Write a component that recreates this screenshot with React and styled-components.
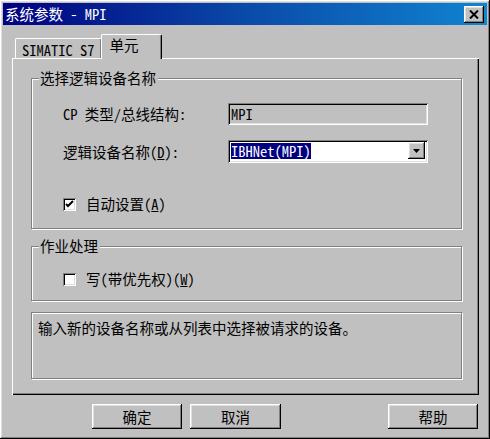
import { createGlobalStyle, styled } from 'styled-components';

const GlobalStyle = createGlobalStyle`
  html, body {
    margin: 0;
    padding: 0;
    background: #c0c0c0;
  }
  body {
    font-family: "Noto Sans Mono CJK SC", "Noto Sans CJK SC", "Liberation Mono", monospace;
    font-size: 14.5px;
    color: #000;
  }
`;

const raised = `
  box-shadow: inset -1px -1px #000, inset 1px 1px #fff,
    inset -2px -2px #808080, inset 2px 2px #dfdfdf;
`;

const sunken = `
  box-shadow: inset 1px 1px #808080, inset -1px -1px #fff,
    inset 2px 2px #000, inset -2px -2px #dfdfdf;
`;

const Window = styled.div`
  box-sizing: border-box;
  width: 490px;
  height: 439px;
  padding: 3px;
  background: #c0c0c0;
  display: flex;
  flex-direction: column;
  ${raised}
`;

const TitleBar = styled.div`
  height: 22px;
  display: flex;
  align-items: center;
  justify-content: space-between;
  padding: 0 3px 0 2px;
  background: linear-gradient(90deg, #000080 0%, #0a4aa8 50%, #1084d0 100%);
  color: #fff;
  line-height: 16px;
`;

const CloseButton = styled.button`
  width: 20px;
  height: 17px;
  padding: 0;
  border: none;
  background: #c0c0c0;
  display: flex;
  align-items: center;
  justify-content: center;
  ${raised}
`;

const Body = styled.div`
  display: flex;
  flex-direction: column;
  padding: 9px 9px 0 9px;
`;

const TabStrip = styled.div`
  display: flex;
  align-items: flex-end;
  height: 24px;
  padding-left: 3px;
  position: relative;
  z-index: 1;
`;

const Tab = styled.div`
  box-sizing: border-box;
  height: ${(p) => (p.$active ? '25px' : '20px')};
  margin-bottom: ${(p) => (p.$active ? '-1px' : '0')};
  margin-left: ${(p) => (p.$active ? '-1px' : '0')};
  padding: ${(p) => (p.$active ? '2px 22px 0 8px' : '2px 6px 0 6px')};
  background: #c0c0c0;
  border-top: 1px solid #fff;
  border-left: 1px solid #fff;
  border-right: 1px solid #000;
  border-radius: 2px 2px 0 0;
  box-shadow: inset -1px 0 #808080;
  line-height: 16px;
  display: flex;
  align-items: ${(p) => (p.$active ? 'flex-start' : 'center')};
`;

const Panel = styled.div`
  box-sizing: border-box;
  width: 467px;
  height: 337px;
  padding: 20px 17px 16px 19px;
  display: flex;
  flex-direction: column;
  box-shadow: inset 1px 1px #fff, inset -1px -1px #000, inset -2px -2px #808080;
`;

const Group = styled.div`
  box-sizing: border-box;
  height: ${(p) => p.$height}px;
  margin-bottom: ${(p) => p.$gap}px;
  border: 1px solid #808080;
  box-shadow: inset 1px 1px #fff, 1px 1px #fff;
  display: flex;
  flex-direction: column;
  padding-left: 31px;
`;

const Legend = styled.div`
  width: fit-content;
  margin: -9px 0 0 -24px;
  padding: 0 2px 0 1px;
  background: #c0c0c0;
  line-height: 16px;
`;

const FieldRow = styled.div`
  display: grid;
  grid-template-columns: 165px 200px;
  align-items: center;
  margin-top: ${(p) => p.$top}px;
  line-height: 16px;
`;

const Field = styled.div`
  box-sizing: border-box;
  height: ${(p) => p.$height}px;
  padding: 3px 3px 0 3px;
  background: ${(p) => (p.$readOnly ? '#c0c0c0' : '#fff')};
  display: flex;
  align-items: flex-start;
  line-height: 16px;
  ${sunken}
`;

const Value = styled.div`
  flex: 1;
  display: flex;
`;

const Selected = styled.span`
  background: #000080;
  color: #fff;
`;

const DropButton = styled.div`
  width: 17px;
  height: 17px;
  margin-top: -1px;
  background: #c0c0c0;
  display: flex;
  align-items: center;
  justify-content: center;
  ${raised}
`;

const CheckRow = styled.label`
  display: flex;
  align-items: center;
  gap: 10px;
  margin-top: ${(p) => p.$top}px;
  line-height: 16px;
`;

const Box = styled.span`
  box-sizing: border-box;
  width: 13px;
  height: 13px;
  background: #fff;
  display: flex;
  align-items: center;
  justify-content: center;
  ${sunken}
`;

const Info = styled.div`
  box-sizing: border-box;
  height: 67px;
  border: 1px solid #808080;
  box-shadow: inset 1px 1px #fff, 1px 1px #fff;
  padding: 7px 6px;
  line-height: 16px;
`;

const ButtonRow = styled.div`
  display: flex;
  gap: 8px;
  margin-top: 9px;
  padding: 0 0 0 80px;
`;

const Button = styled.button`
  box-sizing: border-box;
  width: ${(p) => p.$width || 90}px;
  height: 25px;
  margin-left: ${(p) => (p.$push ? 'auto' : '0')};
  border: none;
  background: #c0c0c0;
  font: inherit;
  line-height: 16px;
  color: #000;
  ${raised}
`;

function Check({ checked }) {
  return (
    <Box>
      {checked && (
        <svg width="9" height="9" viewBox="0 0 9 9">
          <path d="M1 4 L3 6 L8 1" fill="none" stroke="#000" strokeWidth="2" />
        </svg>
      )}
    </Box>
  );
}

export default function App() {
  return (
    <>
      <GlobalStyle />
      <Window>
        <TitleBar>
          <span>系统参数 - MPI</span>
          <CloseButton>
            <svg width="10" height="9" viewBox="0 0 10 9">
              <path d="M1 0.5 L9 8.5 M9 0.5 L1 8.5" stroke="#000" strokeWidth="2" />
            </svg>
          </CloseButton>
        </TitleBar>
        <Body>
          <TabStrip>
            <Tab>SIMATIC S7</Tab>
            <Tab $active>单元</Tab>
          </TabStrip>
          <Panel>
            <Group $height={151} $gap={17}>
              <Legend>选择逻辑设备名称</Legend>
              <FieldRow $top={17}>
                <span>CP 类型/总线结构:</span>
                <Field $height={22} $readOnly>MPI</Field>
              </FieldRow>
              <FieldRow $top={15}>
                <span>
                  逻辑设备名称(<u>D</u>):
                </span>
                <Field $height={23}>
                  <Value>
                    <Selected>IBHNet(MPI)</Selected>
                  </Value>
                  <DropButton>
                    <svg width="7" height="4" viewBox="0 0 7 4">
                      <path d="M0 0 H7 L3.5 4 Z" fill="#000" />
                    </svg>
                  </DropButton>
                </Field>
              </FieldRow>
              <CheckRow $top={33}>
                <Check checked />
                <span>
                  自动设置(<u>A</u>)
                </span>
              </CheckRow>
            </Group>
            <Group $height={55} $gap={11}>
              <Legend>作业处理</Legend>
              <CheckRow $top={17}>
                <Check />
                <span>
                  写(带优先权)(<u>W</u>)
                </span>
              </CheckRow>
            </Group>
            <Info>输入新的设备名称或从列表中选择被请求的设备。</Info>
          </Panel>
          <ButtonRow>
            <Button>确定</Button>
            <Button $width={91}>取消</Button>
            <Button $push>帮助</Button>
          </ButtonRow>
        </Body>
      </Window>
    </>
  );
}
